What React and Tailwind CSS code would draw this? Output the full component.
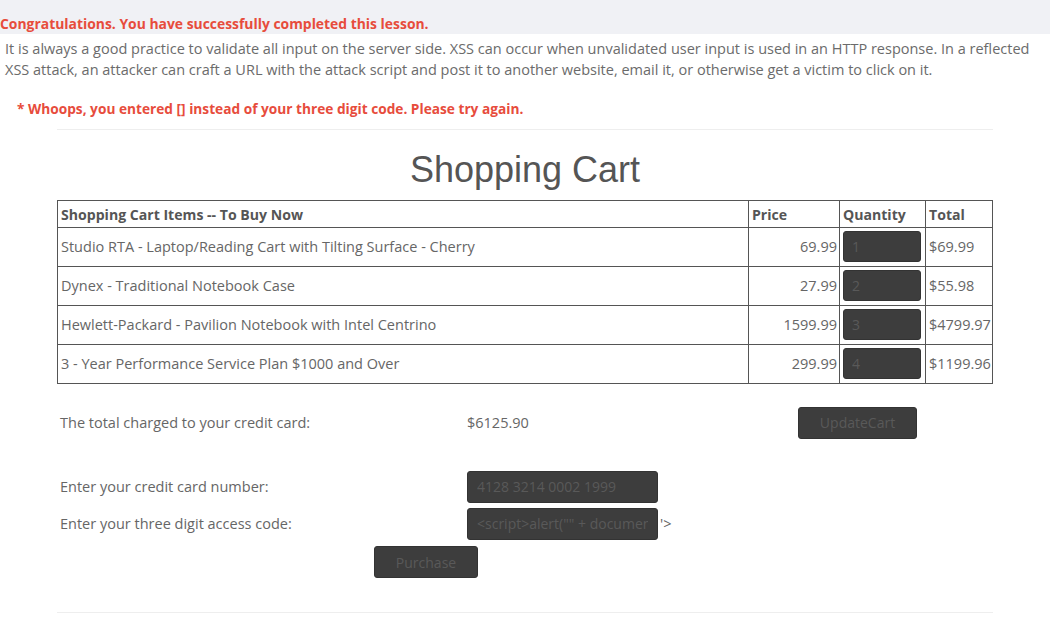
import React from "react";

const items = [
  { name: "Studio RTA - Laptop/Reading Cart with Tilting Surface - Cherry", price: "69.99", qty: "1", total: "$69.99" },
  { name: "Dynex - Traditional Notebook Case", price: "27.99", qty: "2", total: "$55.98" },
  { name: "Hewlett-Packard - Pavilion Notebook with Intel Centrino", price: "1599.99", qty: "3", total: "$4799.97" },
  { name: "3 - Year Performance Service Plan $1000 and Over", price: "299.99", qty: "4", total: "$1199.96" },
];

const darkInput =
  "bg-[#3d3d3d] border border-[#333] rounded-[3px] text-[#595959] text-[14px] outline-none";

export default function App() {
  return (
    <div className="w-[1050px] h-[618px] overflow-hidden bg-white text-[#666] text-[14.5px] leading-[21px] font-['Open_Sans',sans-serif]">
      {/* lesson message band */}
      <div className="h-[34px] bg-[#f0f1f5] pt-[14px]">
        <p className="font-bold text-[#e74c3c] text-[13.9px] leading-[20px]">Congratulations. You have successfully completed this lesson.</p>
      </div>

      <div className="px-[5px] pt-[4px]">
        <p className="text-[#6b6b6b]">
          It is always a good practice to validate all input on the server side. XSS can occur when unvalidated user input is used in an HTTP response. In a reflected XSS attack, an attacker can craft a URL with the attack script and post it to another website, email it, or otherwise get a victim to click on it.
        </p>
        <p className="mt-[18px] pl-[12px] font-bold text-[13.7px] text-[#e74c3c]">* Whoops, you entered [] instead of your three digit code. Please try again.</p>
      </div>

      <div className="mx-[57px]">
        <hr className="mt-[10px] border-t border-[#eee]" />

        <h1 className="mt-[20px] text-center text-[36px] leading-[40px] text-[#555] font-['Liberation_Sans',Arial,sans-serif]">Shopping Cart</h1>

        <table className="mt-[10px] w-full table-fixed border-collapse border border-[#555] text-[#666]">
          <thead>
            <tr className="h-[27px] text-[14.1px] leading-[19px]">
              <th className="border border-[#555] px-[3px] text-left font-bold text-[#555]">Shopping Cart Items -- To Buy Now</th>
              <th className="w-[91px] border border-[#555] px-[3px] text-left font-bold text-[#555]">Price</th>
              <th className="w-[86px] border border-[#555] px-[3px] text-left font-bold text-[#555]">Quantity</th>
              <th className="w-[67px] border border-[#555] px-[3px] text-left font-bold text-[#555]">Total</th>
            </tr>
          </thead>
          <tbody>
            {items.map((it) => (
              <tr key={it.name} className="h-[39px]">
                <td className="border border-[#555] px-[3px] pb-[1px]">{it.name}</td>
                <td className="border border-[#555] pl-[3px] pr-[2px] pb-[1px] text-right">{it.price}</td>
                <td className="border border-[#555] px-[3px]">
                  <input readOnly value={it.qty} className={`${darkInput} w-[78px] h-[31px] px-[8px] block -mt-[1px]`} />
                </td>
                <td className="border border-[#555] pl-[3px] pr-0 pb-[1px] whitespace-nowrap">{it.total}</td>
              </tr>
            ))}
          </tbody>
        </table>

        <div className="mt-[23px] flex items-center h-[31px]">
          <span className="w-[410px] pl-[3px]">The total charged to your credit card:</span>
          <span className="w-[331px]">$6125.90</span>
          <button className={`${darkInput} w-[119px] h-[32px]`}>UpdateCart</button>
        </div>

        <div className="mt-[33px] flex items-center h-[31px]">
          <span className="w-[410px] pl-[3px]">Enter your credit card number:</span>
          <input readOnly value="4128 3214 0002 1999" className={`${darkInput} w-[191px] h-[32px] px-[9px]`} />
        </div>
        <div className="mt-[6px] flex items-center h-[31px]">
          <span className="w-[410px] pl-[3px]">Enter your three digit access code:</span>
          <input readOnly value={'<script>alert("" + document.cookie)</script>'} className={`${darkInput} w-[191px] h-[32px] px-[9px]`} />
          <span className="ml-[2px]">'&gt;</span>
        </div>
        <div className="mt-[7px] flex">
          <button className={`${darkInput} ml-[317px] w-[104px] h-[32px]`}>Purchase</button>
        </div>

        <hr className="mt-[34px] border-t border-[#eee]" />
      </div>
    </div>
  );
}
